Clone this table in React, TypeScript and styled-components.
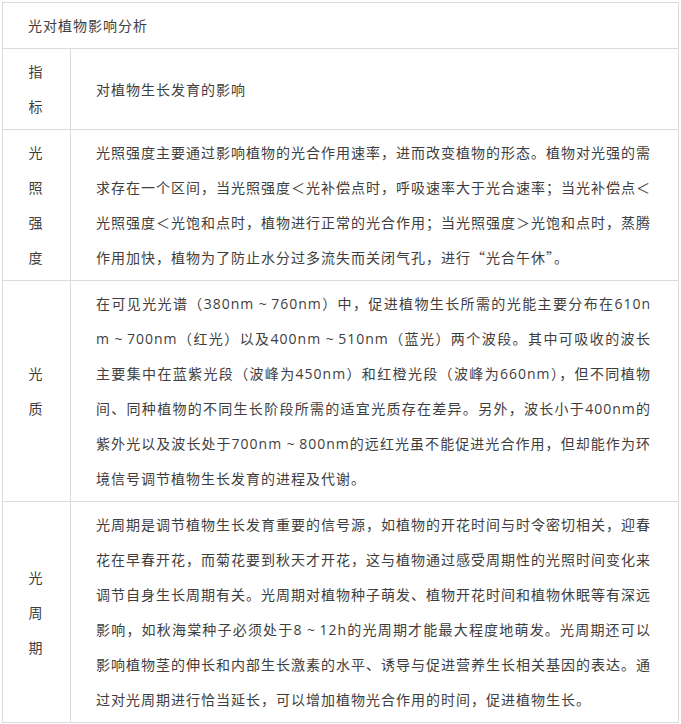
import { Fragment } from "react";
import styled, { createGlobalStyle } from "styled-components";

const GlobalStyle = createGlobalStyle`
  body {
    margin: 0;
    background: #fff;
  }
`;

const Page = styled.div`
  padding: 2px;
  font-family: "Noto Sans CJK SC", "Microsoft YaHei", sans-serif;
  color: #3e3e3e;
  font-size: 14px;
`;

const Table = styled.table`
  width: 677px;
  border-collapse: collapse;
  table-layout: fixed;
`;

const Cell = styled.td<{ $narrow?: boolean }>`
  border: 1px solid #dcdcdc;
  padding: ${({ $narrow }) => ($narrow ? "5px 26px 5px 25px" : "5px 27px 5px 25px")};
  line-height: 35px;
  letter-spacing: 1px;
  vertical-align: middle;
  text-align: ${({ $narrow }) => ($narrow ? "center" : "justify")};
  word-break: break-all;
  box-sizing: border-box;
`;

const HeadCell = styled(Cell)`
  padding: 5px 25px;
  text-align: left;
`;

// latin runs (numbers, units) use a wider face, like the original's YaHei
const Latin = styled.span`
  font-family: "Open Sans", "Noto Sans CJK SC", sans-serif;
`;

const Tilde = styled.span`
  font-family: "Open Sans", sans-serif;
  letter-spacing: 0;
  padding: 0 4.5px;
`;

interface Item {
  label: string;
  text: string;
}

const items: Item[] = [
  {
    label: "光照强度",
    text: "光照强度主要通过影响植物的光合作用速率，进而改变植物的形态。植物对光强的需求存在一个区间，当光照强度＜光补偿点时，呼吸速率大于光合速率；当光补偿点＜光照强度＜光饱和点时，植物进行正常的光合作用；当光照强度＞光饱和点时，蒸腾作用加快，植物为了防止水分过多流失而关闭气孔，进行“光合午休”。",
  },
  {
    label: "光质",
    text: "在可见光光谱（380nm~760nm）中，促进植物生长所需的光能主要分布在610nm~700nm（红光）以及400nm~510nm（蓝光）两个波段。其中可吸收的波长主要集中在蓝紫光段（波峰为450nm）和红橙光段（波峰为660nm），但不同植物间、同种植物的不同生长阶段所需的适宜光质存在差异。另外，波长小于400nm的紫外光以及波长处于700nm~800nm的远红光虽不能促进光合作用，但却能作为环境信号调节植物生长发育的进程及代谢。",
  },
  {
    label: "光周期",
    text: "光周期是调节植物生长发育重要的信号源，如植物的开花时间与时令密切相关，迎春花在早春开花，而菊花要到秋天才开花，这与植物通过感受周期性的光照时间变化来调节自身生长周期有关。光周期对植物种子萌发、植物开花时间和植物休眠等有深远影响，如秋海棠种子必须处于8~12h的光周期才能最大程度地萌发。光周期还可以影响植物茎的伸长和内部生长激素的水平、诱导与促进营养生长相关基因的表达。通过对光周期进行恰当延长，可以增加植物光合作用的时间，促进植物生长。",
  },
];

function renderText(text: string) {
  return text.split(/([0-9A-Za-z]+|~)/).map((part, i) => {
    if (part === "~") return <Tilde key={i}>~</Tilde>;
    if (/^[0-9A-Za-z]+$/.test(part)) return <Latin key={i}>{part}</Latin>;
    return <Fragment key={i}>{part}</Fragment>;
  });
}

export default function App() {
  return (
    <>
      <GlobalStyle />
      <Page>
        <Table>
          <colgroup>
            <col style={{ width: 68 }} />
            <col />
          </colgroup>
          <tbody>
            <tr>
              <HeadCell colSpan={2}>光对植物影响分析</HeadCell>
            </tr>
            <tr>
              <Cell $narrow>指标</Cell>
              <Cell>对植物生长发育的影响</Cell>
            </tr>
            {items.map((item) => (
              <tr key={item.label}>
                <Cell $narrow>{item.label}</Cell>
                <Cell>{renderText(item.text)}</Cell>
              </tr>
            ))}
          </tbody>
        </Table>
      </Page>
    </>
  );
}
